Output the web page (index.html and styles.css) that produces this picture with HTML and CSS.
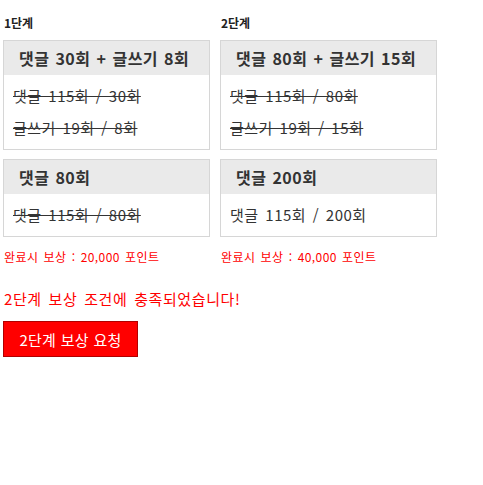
FILE: index.html
```html
<!DOCTYPE html>
<html lang="ko">
<head>
    <meta charset="UTF-8">
    <meta name="viewport" content="width=device-width, initial-scale=1.0">
    <title>단계별 보상</title>
    <link rel="stylesheet" href="styles.css">
</head>
<body>
    <div class="stages">
        <div class="stage stage-1">
            <h4 class="stage-title">1단계</h4>
            <div class="mission">
                <div class="mission-head">댓글 30회 + 글쓰기 8회</div>
                <div class="mission-body">
                    <p class="done">댓글 115회 / 30회</p>
                    <p class="done">글쓰기 19회 / 8회</p>
                </div>
            </div>
            <div class="mission">
                <div class="mission-head">댓글 80회</div>
                <div class="mission-body">
                    <p class="done">댓글 115회 / 80회</p>
                </div>
            </div>
            <p class="reward">완료시 보상 : 20,000 포인트</p>
        </div>

        <div class="stage stage-2">
            <h4 class="stage-title">2단계</h4>
            <div class="mission">
                <div class="mission-head">댓글 80회 + 글쓰기 15회</div>
                <div class="mission-body">
                    <p class="done">댓글 115회 / 80회</p>
                    <p class="done">글쓰기 19회 / 15회</p>
                </div>
            </div>
            <div class="mission">
                <div class="mission-head">댓글 200회</div>
                <div class="mission-body">
                    <p>댓글 115회 / 200회</p>
                </div>
            </div>
            <p class="reward">완료시 보상 : 40,000 포인트</p>
        </div>
    </div>

    <p class="notice">2단계 보상 조건에 충족되었습니다!</p>
    <button type="button" class="btn-request">2단계 보상 요청</button>
</body>
</html>
```

FILE: styles.css
```css
body {
    margin: 0;
    padding: 0 3px;
    font-family: "Noto Sans CJK KR", "Noto Sans", sans-serif;
    color: #333;
    background: #fff;
}
.stages {
    display: flex;
    gap: 10px;
    align-items: flex-start;
}
.stage-1 {
    width: 207px;
}
.stage-2 {
    width: 217px;
}
.stage-title {
    margin: 14px 0 9px 1px;
    font-size: 12px;
    line-height: 17px;
    font-weight: bold;
    color: #222;
}
.mission {
    border: 1px solid #d6d6d6;
    margin-bottom: 9px;
}
.mission-head {
    background-color: #eaeaea;
    height: 34px;
    line-height: 34px;
    padding: 0 15px;
    font-size: 16px;
    font-weight: bold;
    letter-spacing: 0.5px;
    word-spacing: 1px;
    color: #333;
    white-space: nowrap;
}
.mission-body {
    padding: 5px 9px;
}
.mission-body p {
    margin: 0;
    font-size: 15px;
    line-height: 32px;
    letter-spacing: 0.5px;
    word-spacing: 2px;
    color: #333;
}
.mission-body .done {
    text-decoration: line-through;
}
.reward {
    margin: 12px 0 0 1px;
    font-size: 12px;
    line-height: 16px;
    letter-spacing: 0.4px;
    word-spacing: 1.5px;
    color: #ff0000;
}
.notice {
    margin: 24px 0 12px 1px;
    font-size: 15px;
    line-height: 20px;
    letter-spacing: 0.6px;
    word-spacing: 2px;
    color: #ff0000;
}
.btn-request {
    display: block;
    width: 135px;
    height: 36px;
    padding: 0;
    background-color: #ff0000;
    border: 1px solid #b00000;
    color: #fff;
    font-family: inherit;
    font-size: 15px;
    letter-spacing: 0.3px;
    cursor: pointer;
}
```
